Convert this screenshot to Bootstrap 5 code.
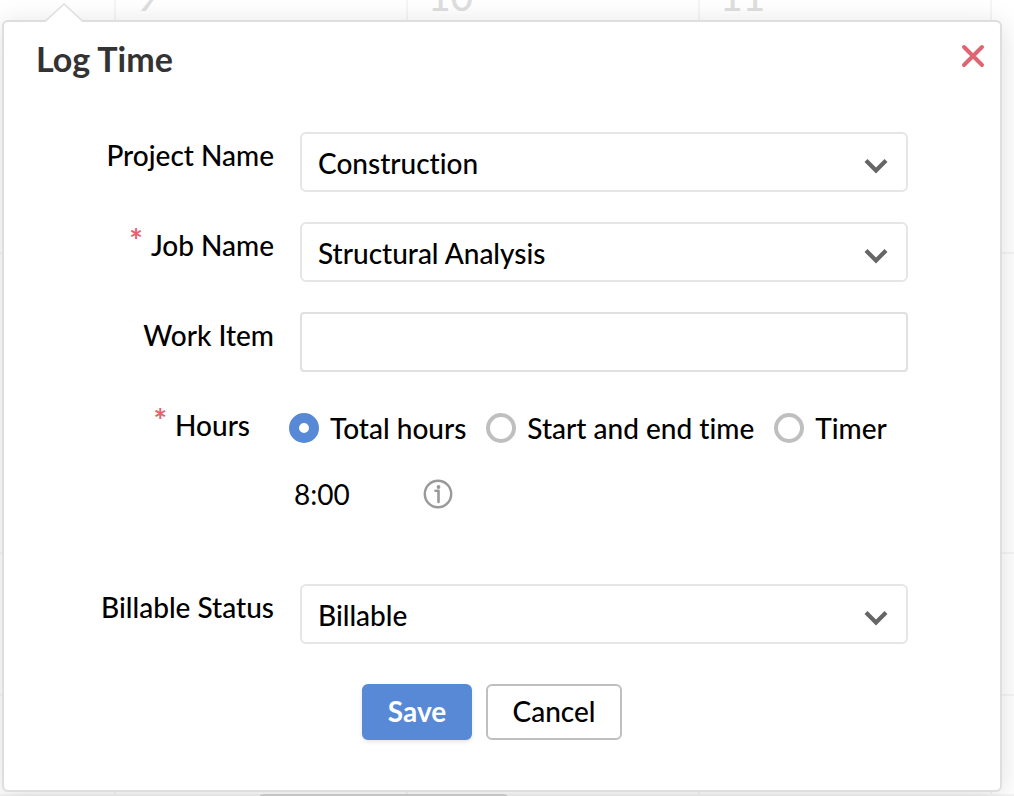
<!DOCTYPE html>
<html lang="en">
<head>
<meta charset="utf-8">
<meta name="viewport" content="width=device-width, initial-scale=1">
<title>Log Time</title>
<link href="https://cdn.jsdelivr.net/npm/bootstrap@5.3.0/dist/css/bootstrap.min.css" rel="stylesheet">
<style>
  body { font-family: Lato, "Liberation Sans", sans-serif; font-size: 28px; line-height: 36px; font-weight: 500; color: #000; background: #fff; }
  body, select, input, button { font-variant-ligatures: none; }
  .stage { min-height: 100vh; padding: 20px 12px 4px 2px; }

  /* calendar behind the popover */
  .calendar { position: absolute; inset: 0; display: grid; grid-template-columns: 114px repeat(3, 292fr) 24fr; grid-template-rows: 254px 300px 142px 1fr; }
  .calendar > div { border-left: 2px solid #f5f5f5; border-bottom: 2px solid #f5f5f5; }
  .calendar > div:nth-child(5n+1) { border-left: 0; }
  .day-no { display: block; margin: -26px 0 0 20px; font-size: 39px; line-height: 44px; color: #dedede; }
  .scroll-thumb { position: absolute; left: 257px; bottom: -12px; width: 253px; height: 14px; border-radius: 7px; background: #d2d2d2; }

  .popup { border: 2px solid #dedede; border-radius: 6px; background: #fff; box-shadow: 0 4px 28px rgba(0, 0, 0, .13); }
  .popup header { padding: 17px 15px 53px 32px; }
  .popup-arrow { position: absolute; left: 40px; top: -20px; }
  .popup-title { font-size: 34px; line-height: 40px; font-weight: 700; color: #333; }
  .close-btn { margin-top: 5px; }

  .time-form { padding-right: 92px; }
  .form-line { display: grid; grid-template-columns: 296px 1fr; min-height: 60px; margin-bottom: 30px; }
  .form-line > .line-label { line-height: 46px; text-align: right; padding-right: 26px; }
  .form-line.hours-line { min-height: 52px; margin-bottom: 22px; }
  .hours-line > .line-label { padding-right: 50px; }
  .req { color: #e8606e; font-size: 32px; font-weight: 700; line-height: 32px; vertical-align: 3px; margin-right: 8px; }

  .form-select, .form-control { height: 60px; color: #000; font-size: 28px; font-weight: 500; line-height: 36px; border: 2px solid #e6e6e6; border-radius: 6px; padding: 11px 60px 9px 16px; }
  .form-select { background-image: url("data:image/svg+xml,%3Csvg xmlns='http://www.w3.org/2000/svg' viewBox='0 0 24 16'%3E%3Cpath d='M2 2.500L12 12.500L22 2.500' fill='none' stroke='%23666' stroke-width='4.200'/%3E%3C/svg%3E"); background-size: 24px 16px; background-position: right 18px top 24px; }
  .form-control { border-color: #e0e0e0; border-radius: 4px; }

  .choices { margin-left: -11px; gap: 20px; }
  .choice { gap: 11px; }
  .choice .form-check-input { flex: none; width: 30px; height: 30px; margin: 0; border: 4px solid #bfbfbf; background-color: #fff; }
  .choice .form-check-input:checked { border: 10px solid #5889d6; background-image: none; background-color: #fff; }
  .time-row { margin: 0 0 72px 290px; }
  .time-box { width: 128px; height: 36px; padding: 0; border: 0; color: #000; background: transparent; }

  .btn { height: 56px; font-size: 28px; font-weight: 500; line-height: 36px; padding: 7px 0 9px; border-radius: 6px; border-width: 2px; }
  .btn-save { width: 110px; color: #fff; font-weight: 700; background: #5889d6; border-color: #5889d6; box-shadow: 0 2px 4px rgba(0, 0, 0, .1); }
  .btn-cancel { width: 136px; color: #000; background: #fff; border-color: #bfbfbf; }
  .actions { gap: 14px; padding: 10px 0 50px 358px; }
</style>
</head>
<body>
<div class="stage position-relative overflow-hidden">
  <div class="calendar" aria-hidden="true">
    <div></div>
    <div><span class="day-no">9</span></div>
    <div><span class="day-no">10</span></div>
    <div><span class="day-no">11</span></div>
    <div></div>
    <div></div><div></div><div></div><div></div><div></div>
    <div></div><div></div><div></div><div></div><div></div>
    <div></div><div></div><div></div><div></div><div></div>
  </div>
  <div class="scroll-thumb"></div>

  <section class="popup position-relative" aria-labelledby="popupTitle">
    <svg class="popup-arrow" width="40" height="22" viewBox="0 0 40 22" aria-hidden="true">
      <path d="M1 20L20 2L39 20V22H1Z" fill="#fff"/>
      <path d="M1 19.500L20 2L39 19.500" fill="none" stroke="#dedede" stroke-width="1.500"/>
    </svg>
    <header class="d-flex justify-content-between align-items-start">
      <h1 class="popup-title mb-0" id="popupTitle">Log Time</h1>
      <button type="button" class="close-btn d-flex border-0 bg-transparent p-0" aria-label="Close">
        <svg width="24" height="24" viewBox="0 0 24 24"><path d="M3 3L21 21M21 3L3 21" fill="none" stroke="#dc6673" stroke-width="4" stroke-linecap="round"/></svg>
      </button>
    </header>

    <form class="time-form">
      <div class="form-line">
        <label class="line-label" for="project">Project Name</label>
        <select class="form-select" id="project"><option>Construction</option></select>
      </div>
      <div class="form-line">
        <label class="line-label" for="job"><span class="req">*</span>Job Name</label>
        <select class="form-select" id="job"><option>Structural Analysis</option></select>
      </div>
      <div class="form-line">
        <label class="line-label" for="item">Work Item</label>
        <input type="text" class="form-control" id="item">
      </div>
      <div class="form-line hours-line" role="radiogroup" aria-labelledby="hoursLabel">
        <span class="line-label" id="hoursLabel"><span class="req">*</span>Hours</span>
        <div class="choices d-flex align-items-center text-nowrap">
          <label class="choice d-flex align-items-center"><input class="form-check-input" type="radio" name="mode" checked>Total hours</label>
          <label class="choice d-flex align-items-center"><input class="form-check-input" type="radio" name="mode">Start and end time</label>
          <label class="choice d-flex align-items-center"><input class="form-check-input" type="radio" name="mode">Timer</label>
        </div>
      </div>
      <div class="time-row d-flex align-items-center">
        <input type="text" class="time-box" value="8:00" aria-label="Hours worked">
        <svg width="32" height="32" viewBox="0 0 32 32" role="img" aria-label="Information">
          <circle cx="16" cy="16" r="13.200" fill="none" stroke="#999" stroke-width="2.400"/>
          <circle cx="16.500" cy="9" r="1.900" fill="#999"/>
          <path d="M13.500 12.800H16.500V24" fill="none" stroke="#999" stroke-width="2.600" stroke-linejoin="round" stroke-linecap="round"/>
        </svg>
      </div>
      <div class="form-line">
        <label class="line-label" for="billable">Billable Status</label>
        <select class="form-select" id="billable"><option>Billable</option></select>
      </div>
      <div class="actions d-flex">
        <button type="button" class="btn btn-save">Save</button>
        <button type="button" class="btn btn-cancel">Cancel</button>
      </div>
    </form>
  </section>
</div>
<script src="https://cdn.jsdelivr.net/npm/bootstrap@5.3.0/dist/js/bootstrap.bundle.min.js"></script>
</body>
</html>
